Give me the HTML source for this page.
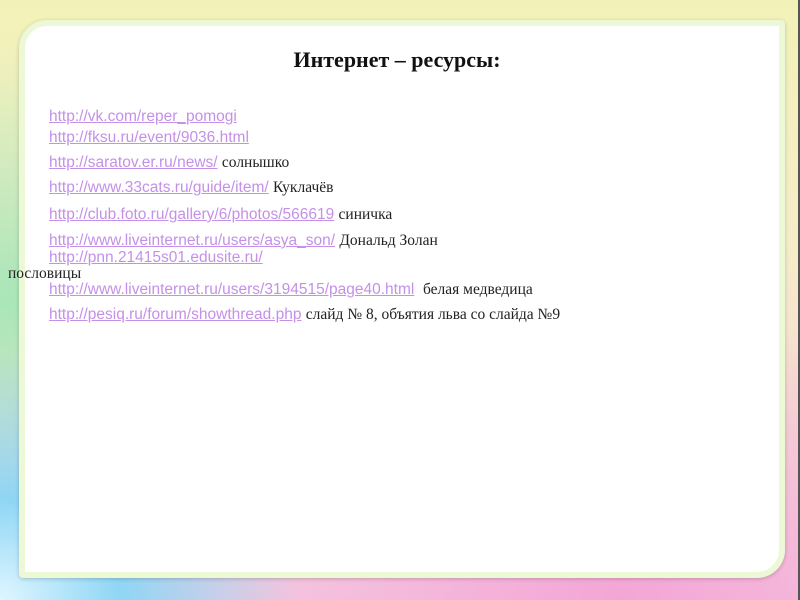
<!DOCTYPE html><html><head><meta charset="utf-8"><style>
body{margin:0;width:800px;height:600px;overflow:hidden;position:relative;
background:
radial-gradient(ellipse 300px 250px at 0px 600px,#dff6ff 0%,#8fd6f5 40%,rgba(120,200,245,0) 100%),
radial-gradient(ellipse 400px 300px at 620px 600px,#f3a6d6 0%,rgba(243,166,214,0) 100%),
radial-gradient(ellipse 300px 250px at 0px 300px,#a8e6b8 0%,rgba(170,230,190,0) 100%),
linear-gradient(180deg,#f2f2b8 0%,#f6edc8 40%,#f5c8e0 100%);}
.edge{position:absolute;right:0;top:0;width:2px;height:600px;background:#555}
.card{position:absolute;left:19px;top:20px;width:754px;height:546px;background:#fff;border:6px solid #edf8d6;border-radius:28px 4px 28px 4px;box-shadow:0 1px 4px rgba(0,0,0,.2)}
h1{position:absolute;left:0;width:794px;top:47px;margin:0;text-align:center;font:bold 22px "Liberation Serif",serif;color:#111}
.l{position:absolute;left:49px;font:15.5px "Liberation Sans",sans-serif;color:#c490e8;white-space:nowrap}
.l u{text-decoration:underline}
.t{font:15.5px "Liberation Serif","Noto Serif CJK SC",serif;color:#222}
</style></head><body><div class="edge"></div><div class="card"></div>
<h1>Интернет – ресурсы:</h1>
<div class="l" style="top:108px"><u>http://vk.com/reper_pomogi</u></div>
<div class="l" style="top:129px"><u>http://fksu.ru/event/9036.html</u></div>
<div class="l" style="top:154px"><u>http://saratov.er.ru/news/</u> <span class="t">солнышко</span></div>
<div class="l" style="top:179px"><u>http://www.33cats.ru/guide/item/</u> <span class="t">Куклачёв</span></div>
<div class="l" style="top:206px"><u>http://club.foto.ru/gallery/6/photos/566619</u> <span class="t">синичка</span></div>
<div class="l" style="top:232px"><u>http://www.liveinternet.ru/users/asya_son/</u> <span class="t">Дональд Золан</span></div>
<div class="l" style="top:249px"><u> http://pnn.21415s01.edusite.ru/</u></div>
<div class="l t" style="left:8px;top:265px">пословицы</div>
<div class="l" style="top:281px"><u>http://www.liveinternet.ru/users/3194515/page40.html</u> &nbsp;<span class="t">белая медведица</span></div>
<div class="l" style="top:306px"><u>http://pesiq.ru/forum/showthread.php</u> <span class="t">слайд № 8, объятия льва со слайда №9</span></div>
</body></html>
